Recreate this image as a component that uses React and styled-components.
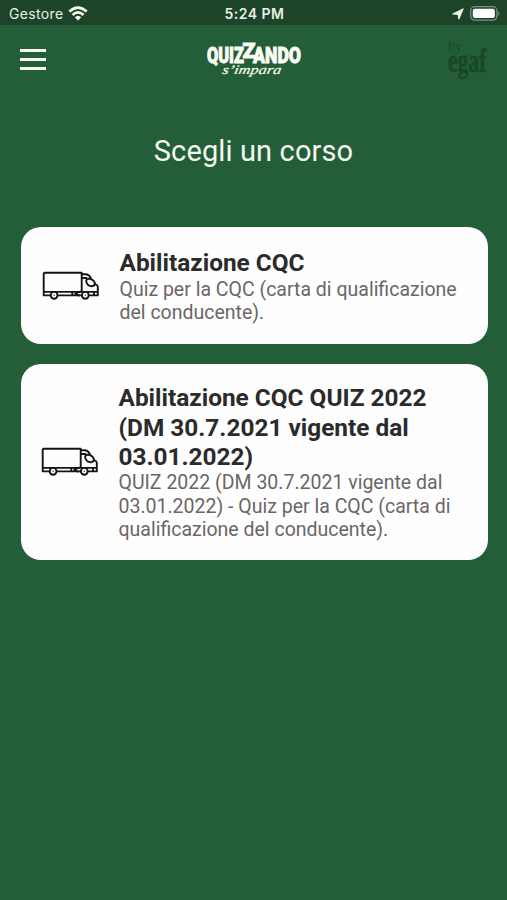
import React from 'react';
import styled, { createGlobalStyle } from 'styled-components';

const GlobalStyle = createGlobalStyle`
  * { box-sizing: border-box; }
  body { margin: 0; background: #245e38; }
`;

const Screen = styled.div`
  width: 100%;
  height: 900px;
  overflow: hidden;
  background: #245e38;
  font-family: Roboto, sans-serif;
`;

const StatusBar = styled.header`
  height: 25px;
  padding: 2px 7px 0 9px;
  display: grid;
  grid-template-columns: 1fr auto 1fr;
  align-items: center;
  background: #1d4329;
  color: #e9f0e8;
  font: 14px/23px Inter, sans-serif;
`;

const Carrier = styled.div`
  display: flex;
  align-items: center;
  gap: 4px;
  letter-spacing: 0.35px;
`;

const Clock = styled.div`
  font-size: 14px;
  font-weight: 600;
  letter-spacing: 0.5px;
`;

const Indicators = styled.div`
  display: flex;
  justify-content: flex-end;
  align-items: center;
  gap: 6px;
`;

const NavBar = styled.nav`
  height: 69px;
  padding: 0 16px 0 20px;
  display: grid;
  grid-template-columns: 26px 1fr 43px;
  align-items: center;
`;

const MenuButton = styled.button`
  width: 26px;
  height: 21px;
  padding: 0;
  border: 0;
  background: none;
  display: flex;
  flex-direction: column;
  justify-content: space-between;
`;

const MenuLine = styled.span`
  height: 2.6px;
  width: 26px;
  background: #f7faf0;
`;

const Logo = styled.svg`
  display: block;
  margin-left: 160px;
  overflow: visible;
`;

const Partner = styled.svg`
  display: block;
  overflow: visible;
`;

const Heading = styled.h1`
  height: 133px;
  margin: 0;
  padding-top: 39px;
  text-align: center;
  color: #f4f8ee;
  font-size: 29px;
  line-height: 36px;
  font-weight: 400;
  letter-spacing: 0.13px;
`;

const Courses = styled.main`
  display: flex;
  flex-direction: column;
  gap: 20px;
  padding: 0 19.5px 0 20.5px;
`;

const Card = styled.article`
  height: ${(p) => p.$height}px;
  padding-left: ${(p) => p.$inset}px;
  display: flex;
  align-items: center;
  gap: 19.5px;
  background: #fefefe;
  border-radius: 20px;
`;

const CardText = styled.div`
  padding-top: ${(p) => p.$offset}px;
  white-space: nowrap;
`;

const CardTitle = styled.h2`
  margin: 0;
  color: #2b2b2b;
  font-size: 24.4px;
  line-height: 29.3px;
  font-weight: 700;
`;

const CardDescription = styled.p`
  margin: 0;
  color: #6b6665;
  font-size: 19.5px;
  line-height: 23.4px;
`;

const Line = styled.span`
  display: block;
`;

const Truck = () => (
  <svg width="58" height="30" viewBox="0 0 58 30" fill="none" stroke="#151515" strokeWidth="1.9" strokeLinejoin="round">
    <path d="M9 24.4H1.7V2.8q0-1 1-1H39.7V21M1.7 20.9H39.7M15.5 24.4H40M47 24.4h8.8v-8.6q0-1.6-2.6-2.6M30.3 21v3.4M33.5 21v3.4" />
    <path d="M39.7 3.2H44q3.5.5 5 4.2M39.7 7h5.5M39.7 20.9H55.8M52 21v3.4" />
    <path d="M46 7.8q-2.4.8-1.7 3.2 1.6 4.6 6 4.2 3.2-.8 2.6-3.3Q50.5 7 46 7.8Z" />
    <path d="M39.5 20.8q-4.6-.2-4.8 2 .2 1.9 3 1.6" />
    <circle cx="12.1" cy="24.3" r="3.4" fill="#fff" />
    <circle cx="43.3" cy="24.3" r="3.4" fill="#fff" />
    <circle cx="12.1" cy="24.3" r=".7" fill="#333" stroke="none" />
    <circle cx="43.3" cy="24.3" r=".7" fill="#333" stroke="none" />
  </svg>
);

const Wifi = () => (
  <svg width="20" height="15" viewBox="0 0 20 15" fill="none" stroke="#f6faf3" strokeWidth="2.7">
    <path d="M1.3 5.6Q10-2.4 18.7 5.6M4.5 8.9Q10 4 15.5 8.9" />
    <path d="M6.8 11.3Q10 8.3 13.2 11.3L10 14.5Z" fill="#f6faf3" stroke="none" />
  </svg>
);

const LocationArrow = () => (
  <svg width="12" height="12" viewBox="0 0 12 12" fill="#f8fcf4" stroke="#f8fcf4" strokeWidth=".8" strokeLinejoin="round">
    <path d="M11.3.7 6.9 11.2 6.1 6.5.6 6Z" />
  </svg>
);

const Battery = () => (
  <svg width="30" height="15" viewBox="0 0 30 15">
    <rect x=".7" y=".7" width="26.2" height="13.4" rx="4" fill="none" stroke="#789581" strokeWidth="1.3" />
    <rect x="2.8" y="2.7" width="22" height="9.4" rx="2" fill="#fff" />
    <path d="M28.3 5q2.2 2.5 0 5Z" fill="#789581" />
  </svg>
);

const courses = [
  {
    height: 117,
    inset: 21.5,
    offset: 2,
    title: ['Abilitazione CQC'],
    description: ['Quiz per la CQC (carta di qualificazione', 'del conducente).'],
  },
  {
    height: 196,
    inset: 20.5,
    offset: 0.6,
    title: ['Abilitazione CQC QUIZ 2022', '(DM 30.7.2021 vigente dal', '03.01.2022)'],
    description: ['QUIZ 2022 (DM 30.7.2021 vigente dal', '03.01.2022) - Quiz per la CQC (carta di', 'qualificazione del conducente).'],
  },
];

export default function App() {
  return (
    <Screen>
      <GlobalStyle />
      <StatusBar>
        <Carrier>Gestore <Wifi /></Carrier>
        <Clock>5:24 PM</Clock>
        <Indicators><LocationArrow /><Battery /></Indicators>
      </StatusBar>
      <NavBar>
        <MenuButton aria-label="Menu"><MenuLine /><MenuLine /><MenuLine /></MenuButton>
        <Logo width="96" height="40" viewBox="0 0 96 40" fill="#fafdf5" stroke="#fafdf5">
          <g fontFamily="Roboto, sans-serif" fontWeight="900" strokeWidth=".9">
            <text x="1" y="22.6" fontSize="21.5" textLength="37" lengthAdjust="spacingAndGlyphs">QUIZ</text>
            <text x="36.5" y="17.5" fontSize="20.5" textLength="13" lengthAdjust="spacingAndGlyphs">Z</text>
            <text x="47" y="22.6" fontSize="21.5" textLength="48" lengthAdjust="spacingAndGlyphs">ANDO</text>
          </g>
          <text x="17" y="34.5" fontFamily="Liberation Serif, serif" fontSize="13" fontStyle="italic" strokeWidth=".2" textLength="59" lengthAdjust="spacingAndGlyphs" transform="skewX(-12) translate(6 0)">s’impara</text>
        </Logo>
        <Partner width="43" height="42" viewBox="0 0 43 42" fill="#194728">
          <text x="0" y="12" fontFamily="Liberation Serif, serif" fontSize="15.5" textLength="14" lengthAdjust="spacingAndGlyphs">by</text>
          <text x="0" y="33" fontFamily="Liberation Serif, serif" fontSize="34" fontWeight="700" stroke="#194728" strokeWidth=".7" textLength="38.5" lengthAdjust="spacingAndGlyphs">egaf</text>
        </Partner>
      </NavBar>
      <Heading>Scegli un corso</Heading>
      <Courses>
        {courses.map((course) => (
          <Card key={course.title[0]} $height={course.height} $inset={course.inset}>
            <Truck />
            <CardText $offset={course.offset}>
              <CardTitle>{course.title.map((line) => <Line key={line}>{line}</Line>)}</CardTitle>
              <CardDescription>{course.description.map((line) => <Line key={line}>{line}</Line>)}</CardDescription>
            </CardText>
          </Card>
        ))}
      </Courses>
    </Screen>
  );
}
